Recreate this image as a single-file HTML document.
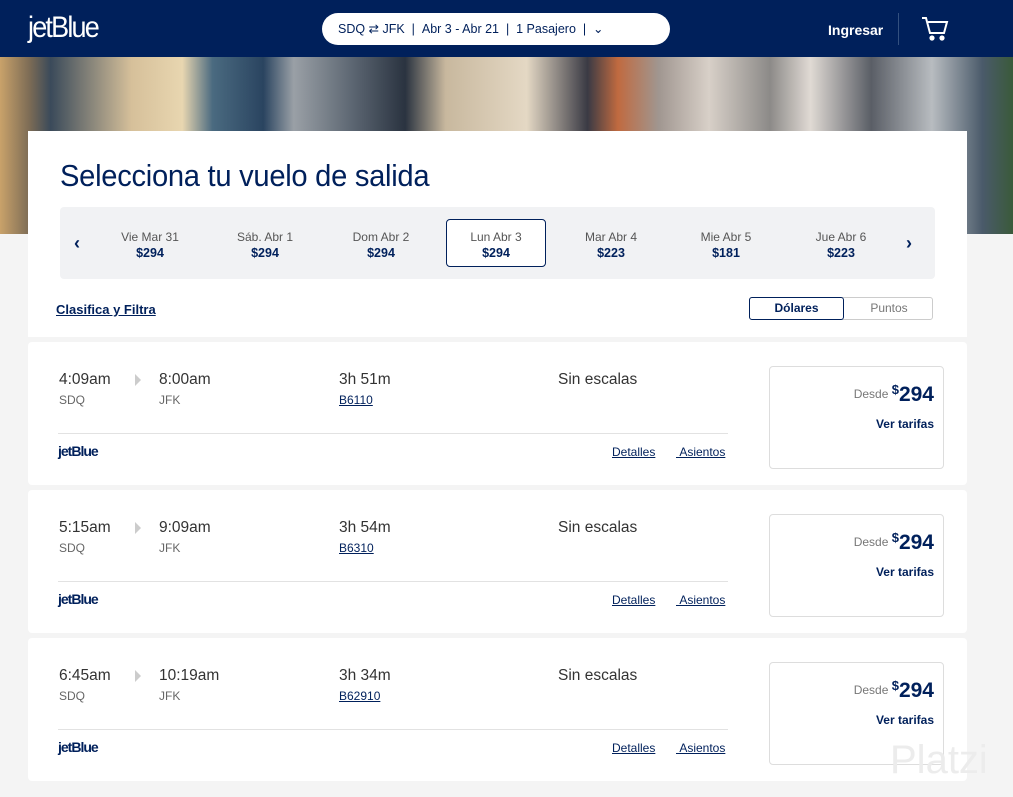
<!DOCTYPE html>
<html><head><meta charset="utf-8"><style>
*{box-sizing:border-box;margin:0;padding:0}
body{width:1013px;height:797px;overflow:hidden;background:#f4f4f4;font-family:"Liberation Sans",sans-serif;position:relative;color:#2b2b2b}
.hdr{position:absolute;left:0;top:0;width:1013px;height:57px;background:#00205b}
.logo{position:absolute;left:28px;top:11px;color:#fff;font-size:30px;letter-spacing:-2px;transform:scaleX(.9);transform-origin:left}
.search{position:absolute;left:322px;top:13px;width:348px;height:32px;background:#fff;border-radius:16px;color:#00205b;font-size:12.5px;line-height:32px;padding-left:16px;white-space:nowrap}
.ing{position:absolute;left:828px;top:22px;color:#fff;font-weight:bold;font-size:14px}
.sep{position:absolute;left:898px;top:13px;width:1px;height:32px;background:#33507f}
.hero{position:absolute;left:0;top:57px;width:1013px;height:177px;background:linear-gradient(90deg,#c9a26a 0,#7a6a55 3%,#3a4a5a 5%,#d6c09a 13%,#e8d6b0 18%,#4a6a80 21%,#2a4460 26%,#9aa0a6 29%,#5a6470 35%,#2a3340 40%,#c8b89e 44%,#e4d8c4 52%,#3a3a44 58%,#c06a40 61%,#a09690 65%,#d8d0c8 70%,#8c8a88 76%,#e0dad4 80%,#5a5e66 86%,#b8bcc0 92%,#4a5a6a 97%,#3a5a3a 100%)}
.panel{position:absolute;left:28px;top:131px;width:939px;height:206px;background:#fff}
h1{position:absolute;left:60px;top:158px;font-weight:normal;font-size:31px;color:#00205b;letter-spacing:-.3px;transform:scaleX(.94);transform-origin:left}
.dates{position:absolute;left:60px;top:207px;width:875px;height:72px;background:#f1f2f4;border-radius:4px}
.d{position:absolute;top:22px;width:100px;text-align:center;font-size:12px;color:#555;line-height:16px}
.d b{display:block;color:#00205b;font-size:12.5px}
.sel{position:absolute;left:386px;top:12px;width:100px;height:48px;border:1.5px solid #00205b;border-radius:4px;background:#fff}
.arr{position:absolute;top:26px;color:#00205b;font-size:18px;font-weight:bold}
.cf{position:absolute;left:56px;top:302px;color:#00205b;font-size:13px;font-weight:bold;text-decoration:underline}
.tog{position:absolute;left:749px;top:297px;width:184px;height:23px;border:1px solid #ccc;border-radius:3px;font-size:12px}
.tog .a{position:absolute;left:-1px;top:-1px;width:95px;height:23px;border:1.5px solid #00205b;border-radius:3px;text-align:center;line-height:20px;color:#00205b;font-weight:bold}
.tog .b{position:absolute;left:95px;top:0;width:88px;text-align:center;line-height:21px;color:#777}
.card{position:absolute;left:28px;width:939px;height:143px;background:#fff;border-radius:4px}
.t{position:absolute;top:29px;font-size:15.5px;color:#333}
.s{position:absolute;top:51px;font-size:12px;color:#666}
.tri{position:absolute;left:107px;top:32px;width:0;height:0;border-left:6px solid #ccc;border-top:6px solid transparent;border-bottom:6px solid transparent}
.fn{position:absolute;left:311px;top:51px;font-size:12px;color:#00205b;text-decoration:underline}
.hr{position:absolute;left:30px;top:91px;width:670px;height:1px;background:#e2e2e2}
.jl{position:absolute;left:30px;top:101px;font-size:14px;font-weight:bold;color:#00205b;letter-spacing:-1px}
.lk{position:absolute;top:103px;font-size:12px;color:#00205b;text-decoration:underline}
.pb{position:absolute;left:741px;top:24px;width:175px;height:103px;border:1px solid #ddd;border-radius:4px}
.pr{position:absolute;right:9px;top:15px;color:#00205b;font-size:21px;font-weight:bold}
.pr small{font-size:12px;color:#777;font-weight:normal;vertical-align:3px}
.pr sup{font-size:13px;vertical-align:7px}
.vt{position:absolute;right:9px;top:50px;color:#00205b;font-size:12px;font-weight:bold}
</style></head><body>
<div class="hdr">
<div class="logo">jetBlue</div>
<div class="search">SDQ ⇄ JFK &nbsp;| &nbsp;Abr 3 - Abr 21 &nbsp;| &nbsp;1 Pasajero &nbsp;| &nbsp;⌄</div>
<div class="ing">Ingresar</div><div class="sep"></div>
<svg style="position:absolute;left:921px;top:16px" width="28" height="26" viewBox="0 0 28 26" fill="none" stroke="#fff" stroke-width="2"><path d="M1 2h4l4 15h14l3-11H7"/><circle cx="11" cy="22" r="1.6" fill="#fff"/><circle cx="21" cy="22" r="1.6" fill="#fff"/></svg>
</div>
<div class="hero"></div>
<div class="panel"></div>
<h1>Selecciona tu vuelo de salida</h1>
<div class="dates">
<div class="arr" style="left:14px">‹</div>
<div class="sel"></div>
<div class="d" style="left:40px">Vie Mar 31<b>$294</b></div>
<div class="d" style="left:155px">Sáb. Abr 1<b>$294</b></div>
<div class="d" style="left:271px">Dom Abr 2<b>$294</b></div>
<div class="d" style="left:386px">Lun Abr 3<b>$294</b></div>
<div class="d" style="left:501px">Mar Abr 4<b>$223</b></div>
<div class="d" style="left:616px">Mie Abr 5<b>$181</b></div>
<div class="d" style="left:731px">Jue Abr 6<b>$223</b></div>
<div class="arr" style="left:846px">›</div>
</div>
<div class="cf">Clasifica y Filtra</div>
<div class="tog"><div class="a">Dólares</div><div class="b">Puntos</div></div>

<div class="card" style="top:342px"><div class="t" style="left:31px">4:09am</div><div class="s" style="left:31px">SDQ</div><div class="tri"></div><div class="t" style="left:131px">8:00am</div><div class="s" style="left:131px">JFK</div><div class="t" style="left:311px">3h 51m</div><div class="fn">B6110</div><div class="t" style="left:530px">Sin escalas</div><div class="hr"></div><div class="jl">jetBlue</div><div class="lk" style="left:584px">Detalles</div><div class="lk" style="left:648px">&nbsp;Asientos</div><div class="pb"><div class="pr"><small>Desde </small><sup>$</sup>294</div><div class="vt">Ver tarifas</div></div></div>

<div class="card" style="top:490px"><div class="t" style="left:31px">5:15am</div><div class="s" style="left:31px">SDQ</div><div class="tri"></div><div class="t" style="left:131px">9:09am</div><div class="s" style="left:131px">JFK</div><div class="t" style="left:311px">3h 54m</div><div class="fn">B6310</div><div class="t" style="left:530px">Sin escalas</div><div class="hr"></div><div class="jl">jetBlue</div><div class="lk" style="left:584px">Detalles</div><div class="lk" style="left:648px">&nbsp;Asientos</div><div class="pb"><div class="pr"><small>Desde </small><sup>$</sup>294</div><div class="vt">Ver tarifas</div></div></div>

<div class="card" style="top:638px"><div class="t" style="left:31px">6:45am</div><div class="s" style="left:31px">SDQ</div><div class="tri"></div><div class="t" style="left:131px">10:19am</div><div class="s" style="left:131px">JFK</div><div class="t" style="left:311px">3h 34m</div><div class="fn">B62910</div><div class="t" style="left:530px">Sin escalas</div><div class="hr"></div><div class="jl">jetBlue</div><div class="lk" style="left:584px">Detalles</div><div class="lk" style="left:648px">&nbsp;Asientos</div><div class="pb"><div class="pr"><small>Desde </small><sup>$</sup>294</div><div class="vt">Ver tarifas</div></div></div>
<div style="position:absolute;left:890px;top:738px;font-size:40px;color:#ececec">Platzi</div>
</body></html>
